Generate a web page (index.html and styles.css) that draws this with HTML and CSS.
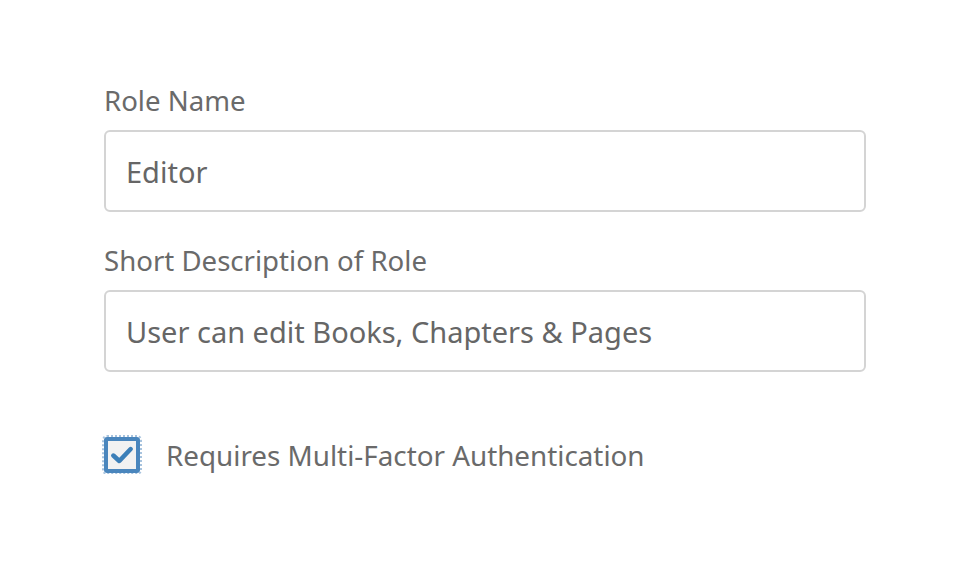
FILE: index.html
```html
<!DOCTYPE html>
<html>
<head>
<meta charset="utf-8">
<link rel="stylesheet" href="styles.css">
</head>
<body>
<form class="form">
  <div class="field">
    <label class="label" for="name">Role Name</label>
    <input class="input" id="name" type="text" value="Editor">
  </div>
  <div class="field">
    <label class="label" for="desc">Short Description of Role</label>
    <input class="input" id="desc" type="text" value="User can edit Books, Chapters &amp; Pages">
  </div>
  <label class="check">
    <span class="box">
      <svg viewBox="0 0 24 24" width="26" height="26"><path d="M4 12.5 L9.5 17.5 L20 6.5" fill="none" stroke="#3c7fb8" stroke-width="4.2" stroke-linecap="round" stroke-linejoin="round"/></svg>
    </span>
    <span class="check-text">Requires Multi-Factor Authentication</span>
  </label>
</form>
</body>
</html>
```
FILE: styles.css
```css
html, body {
  margin: 0;
  padding: 0;
  background: #fff;
}
body {
  font-family: "Noto Sans", "Open Sans", sans-serif;
  color: #666;
}
.form {
  width: 762px;
  margin: 0 0 0 104px;
  padding-top: 82px;
  display: flex;
  flex-direction: column;
}
.field {
  display: flex;
  flex-direction: column;
  margin-bottom: 30px;
}
.field + .field {
  margin-bottom: 64px;
}
.label {
  font-size: 27.6px;
  line-height: 36px;
  color: #6a6a6a;
  margin-bottom: 12px;
}
.input {
  box-sizing: border-box;
  height: 82px;
  border: 2px solid #d4d4d4;
  border-radius: 6px;
  padding: 0 20px;
  font-family: inherit;
  font-size: 29px;
  color: #666;
  background: #fff;
  outline: none;
}
.check {
  display: flex;
  align-items: center;
  gap: 26px;
}
.box {
  box-sizing: border-box;
  width: 36px;
  height: 36px;
  border: 4px solid #4a86bd;
  border-radius: 3px;
  background: #f2f2f2;
  outline: 2px dotted #a7c3de;
  outline-offset: 0;
  display: flex;
  align-items: center;
  justify-content: center;
}
.check-text {
  font-size: 27.8px;
  color: #6a6a6a;
}
```
